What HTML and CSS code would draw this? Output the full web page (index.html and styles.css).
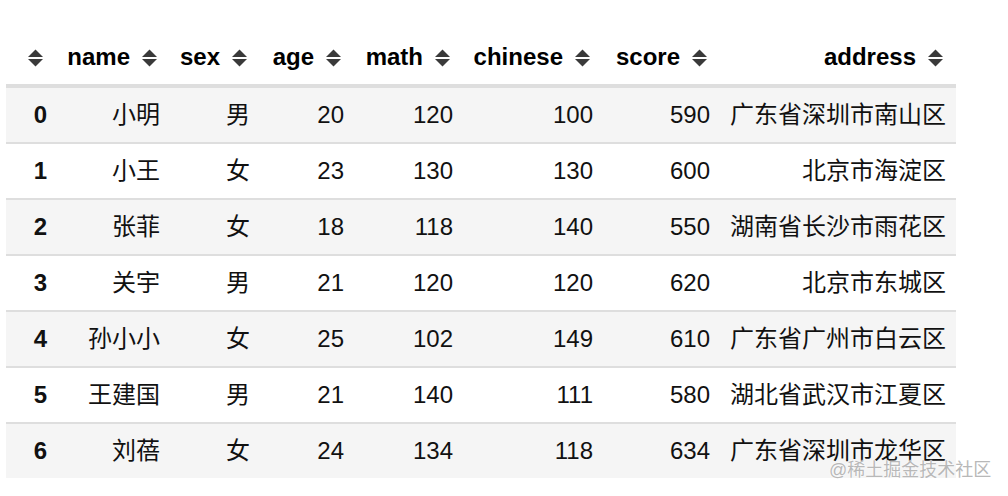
FILE: index.html
```html
<!DOCTYPE html>
<html lang="zh">
<head>
<meta charset="utf-8">
<link rel="stylesheet" href="styles.css">
</head>
<body>
<div class="wrap">
<table class="df">
  <colgroup>
    <col class="c-idx"><col class="c-name"><col class="c-sex"><col class="c-age">
    <col class="c-math"><col class="c-chinese"><col class="c-score"><col class="c-addr">
  </colgroup>
  <thead>
    <tr>
      <th><span class="sort"><svg viewBox="0 0 15 18" width="15" height="18"><polygon points="0,8 7.5,0.5 15,8"/><polygon points="0,10 15,10 7.5,17.5"/></svg></span></th>
      <th>name<span class="sort"><svg viewBox="0 0 15 18" width="15" height="18"><polygon points="0,8 7.5,0.5 15,8"/><polygon points="0,10 15,10 7.5,17.5"/></svg></span></th>
      <th>sex<span class="sort"><svg viewBox="0 0 15 18" width="15" height="18"><polygon points="0,8 7.5,0.5 15,8"/><polygon points="0,10 15,10 7.5,17.5"/></svg></span></th>
      <th>age<span class="sort"><svg viewBox="0 0 15 18" width="15" height="18"><polygon points="0,8 7.5,0.5 15,8"/><polygon points="0,10 15,10 7.5,17.5"/></svg></span></th>
      <th>math<span class="sort"><svg viewBox="0 0 15 18" width="15" height="18"><polygon points="0,8 7.5,0.5 15,8"/><polygon points="0,10 15,10 7.5,17.5"/></svg></span></th>
      <th>chinese<span class="sort"><svg viewBox="0 0 15 18" width="15" height="18"><polygon points="0,8 7.5,0.5 15,8"/><polygon points="0,10 15,10 7.5,17.5"/></svg></span></th>
      <th>score<span class="sort"><svg viewBox="0 0 15 18" width="15" height="18"><polygon points="0,8 7.5,0.5 15,8"/><polygon points="0,10 15,10 7.5,17.5"/></svg></span></th>
      <th>address<span class="sort"><svg viewBox="0 0 15 18" width="15" height="18"><polygon points="0,8 7.5,0.5 15,8"/><polygon points="0,10 15,10 7.5,17.5"/></svg></span></th>
    </tr>
  </thead>
  <tbody>
    <tr class="odd"><td class="idx">0</td><td>小明</td><td>男</td><td>20</td><td>120</td><td>100</td><td>590</td><td>广东省深圳市南山区</td></tr>
    <tr><td class="idx">1</td><td>小王</td><td>女</td><td>23</td><td>130</td><td>130</td><td>600</td><td>北京市海淀区</td></tr>
    <tr class="odd"><td class="idx">2</td><td>张菲</td><td>女</td><td>18</td><td>118</td><td>140</td><td>550</td><td>湖南省长沙市雨花区</td></tr>
    <tr><td class="idx">3</td><td>关宇</td><td>男</td><td>21</td><td>120</td><td>120</td><td>620</td><td>北京市东城区</td></tr>
    <tr class="odd"><td class="idx">4</td><td>孙小小</td><td>女</td><td>25</td><td>102</td><td>149</td><td>610</td><td>广东省广州市白云区</td></tr>
    <tr><td class="idx">5</td><td>王建国</td><td>男</td><td>21</td><td>140</td><td>111</td><td>580</td><td>湖北省武汉市江夏区</td></tr>
    <tr class="odd last"><td class="idx">6</td><td>刘蓓</td><td>女</td><td>24</td><td>134</td><td>118</td><td>634</td><td>广东省深圳市龙华区</td></tr>
  </tbody>
</table>
<div class="watermark">@稀土掘金技术社区</div>
</div>
</body>
</html>
```
FILE: styles.css
```css
html, body {
  margin: 0;
  padding: 0;
  background: #ffffff;
}
body {
  width: 1008px;
  height: 496px;
  overflow: hidden;
  font-family: "Liberation Sans", Arial, "Noto Sans CJK SC", sans-serif;
  color: #111111;
}
.wrap {
  position: relative;
  width: 1008px;
  height: 496px;
  padding: 30px 0 0 6px;
  box-sizing: border-box;
}
.df {
  border-collapse: collapse;
  table-layout: fixed;
  width: 950px;
  font-size: 24px;
  line-height: 28px;
}
.c-idx { width: 50px; }
.c-name { width: 114px; }
.c-sex { width: 90px; }
.c-age { width: 94px; }
.c-math { width: 109px; }
.c-chinese { width: 140px; }
.c-score { width: 117px; }
.c-addr { width: 236px; }

.df th {
  height: 54px;
  padding: 0 13px 0 0;
  text-align: right;
  font-weight: bold;
  color: #000;
  white-space: nowrap;
  vertical-align: middle;
  border-bottom: 4px solid #dedede;
}
.sort {
  display: inline-block;
  width: 15px;
  height: 18px;
  margin-left: 12px;
  vertical-align: -2px;
}
.sort svg {
  display: block;
  fill: #3a3a3a;
}
.df td {
  height: 54px;
  padding: 0 10px 0 0;
  text-align: right;
  vertical-align: middle;
  white-space: nowrap;
  border-bottom: 2px solid #dedede;
}
.df td.idx {
  font-weight: bold;
  padding-right: 9px;
}
.df tr.odd td {
  background: #f5f5f5;
}
.df tr.last td {
  border-bottom: none;
}
.watermark {
  position: absolute;
  left: 829px;
  top: 460px;
  font-size: 18px;
  line-height: 20px;
  color: #b8b8b8;
  text-shadow: 0 0 2px #ffffff, 0 0 1px #ffffff;
  white-space: nowrap;
  font-family: "Liberation Sans", "Noto Sans CJK SC", sans-serif;
}
```
